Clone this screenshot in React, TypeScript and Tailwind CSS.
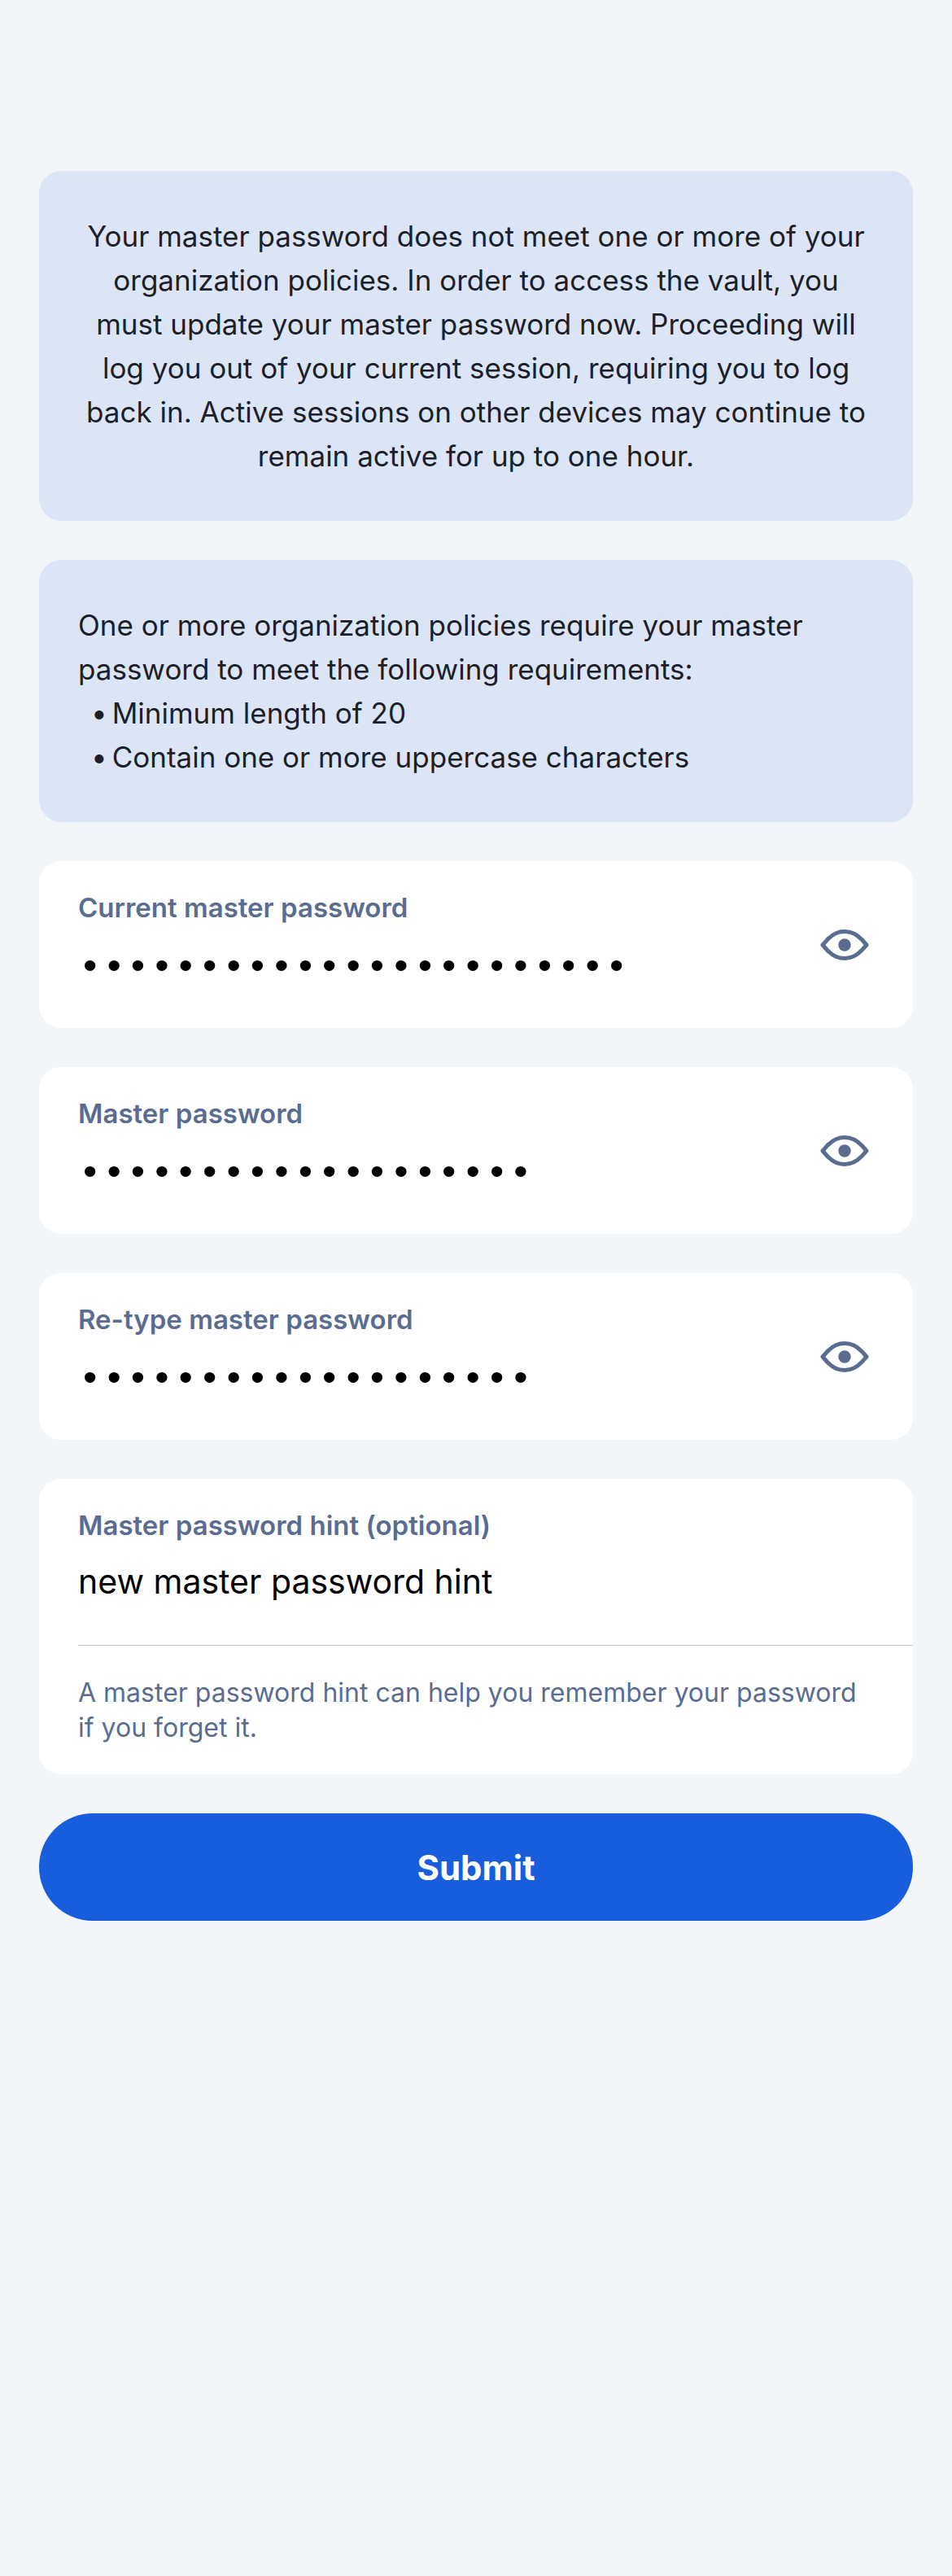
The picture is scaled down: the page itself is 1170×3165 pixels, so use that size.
import React, { useId, useState } from "react";

function EyeIcon() {
  return (
    <svg viewBox="0 0 60 38" className="h-[38px] w-[60px]" fill="none" aria-hidden="true">
      <path
        d="M3 19L8.500 12.800C14.500 6.300 20.500 2.500 30 2.500S45.500 6.300 51.500 12.800L57 19L51.500 25.200C45.500 31.700 39.500 35.500 30 35.500S14.500 31.700 8.500 25.200Z"
        stroke="currentColor"
        strokeWidth="5"
        strokeLinejoin="round"
      />
      <circle cx="30" cy="19" r="7.700" fill="currentColor" />
    </svg>
  );
}

function PasswordField({ label, initial }: { label: string; initial: string }) {
  const id = useId();
  const [value, setValue] = useState(initial);
  const [visible, setVisible] = useState(false);
  return (
    <div className="flex items-center rounded-[27px] bg-white px-12">
      <div className="min-w-0 flex-1 pt-[35px] pb-10">
        <label htmlFor={id} className="block text-[33px] leading-[44px] font-semibold text-[#5a6d91]">
          {label}
        </label>
        <input
          id={id}
          type={visible ? "text" : "password"}
          value={value}
          onChange={(e) => setValue(e.target.value)}
          className="mt-5 block h-[66px] w-full bg-transparent font-['Liberation_Mono',monospace] text-[49px] text-black outline-none"
        />
      </div>
      <button
        type="button"
        aria-label={`Toggle visibility of ${label}`}
        aria-pressed={visible}
        onClick={() => setVisible(!visible)}
        className="flex h-[72px] w-[72px] items-center justify-center text-[#5a6d91]"
      >
        <EyeIcon />
      </button>
    </div>
  );
}

const requirements = ["Minimum length of 20", "Contain one or more uppercase characters"];

export default function App() {
  const [hint, setHint] = useState("new master password hint");
  return (
    <main className="min-h-screen bg-[#f2f6f9] px-12 pt-[210px] pb-12 font-[Inter,sans-serif]">
      <form className="flex flex-col gap-12" onSubmit={(e) => e.preventDefault()}>
        <p className="rounded-[27px] bg-[#dbe5f6] px-12 py-[53px] text-center text-[35px] leading-[54px] text-[#1b2029]">
          Your master password does not meet one or more of your organization policies. In order to
          access the vault, you must update your master password now. Proceeding will log you out of
          your current session, requiring you to log back in. Active sessions on other devices may
          continue to remain active for up to one hour.
        </p>

        <section className="rounded-[27px] bg-[#dbe5f6] px-12 py-[53px] text-[35px] leading-[54px] text-[#1b2029]">
          <p>
            One or more organization policies require your master password to meet the following
            requirements:
          </p>
          <ul className="pl-4">
            {requirements.map((item) => (
              <li key={item} className="flex gap-1.5">
                <span>•</span>
                <span>{item}</span>
              </li>
            ))}
          </ul>
        </section>

        <PasswordField label="Current master password" initial="correct-horse-battery-1" />
        <PasswordField label="Master password" initial="new-master-password" />
        <PasswordField label="Re-type master password" initial="new-master-password" />

        <div className="rounded-[27px] bg-white pl-12">
          <div className="pt-[35px] pr-12 pb-[45px]">
            <label
              htmlFor="hint"
              className="block text-[33px] leading-[44px] font-semibold text-[#5a6d91]"
            >
              Master password hint (optional)
            </label>
            <input
              id="hint"
              type="text"
              value={hint}
              aria-describedby="hint-help"
              onChange={(e) => setHint(e.target.value)}
              className="mt-3.5 block h-[66px] w-full bg-transparent text-[41px] text-black outline-none"
            />
          </div>
          <p
            id="hint-help"
            className="border-t border-[#c6c6c8] pt-9 pr-12 pb-9 text-[32px] leading-[43px] text-[#5a6d91]"
          >
            A master password hint can help you remember your password if you forget it.
          </p>
        </div>

        <button
          type="submit"
          className="h-[132px] w-full rounded-full bg-[#175ddc] text-[42px] font-bold text-white"
        >
          Submit
        </button>
      </form>
    </main>
  );
}
